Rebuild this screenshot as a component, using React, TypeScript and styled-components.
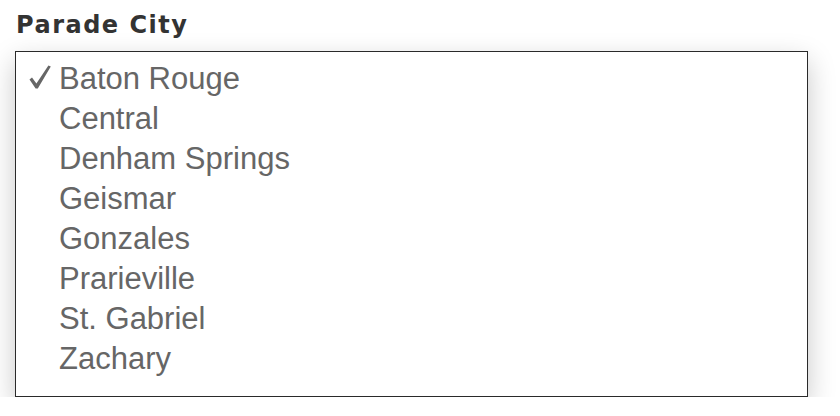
import { createGlobalStyle } from "styled-components";
import styled from "styled-components";

const cities = [
  "Baton Rouge",
  "Central",
  "Denham Springs",
  "Geismar",
  "Gonzales",
  "Prarieville",
  "St. Gabriel",
  "Zachary",
];

const GlobalStyle = createGlobalStyle`
  html, body {
    margin: 0;
    padding: 0;
    background: #ffffff;
  }
`;

const CheckIcon = () => (
  <svg width="22" height="24" viewBox="0 0 22 24">
    <path
      d="M0.5 14.6 L3 12.6 L7.4 18.4 L19.4 0.4 L21.8 1.6 L8.8 23.6 L6.6 23.6 Z"
      fill="#666666"
    />
  </svg>
);

const App = () => {
  const selected = "Baton Rouge";

  return (
    <>
      <GlobalStyle />
      <Field>
        <Label>Parade City</Label>
        <List>
          { cities.map(city => (
            <Option key={ city }>
              <Check>{ city === selected && <CheckIcon /> }</Check>
              <Name>{ city }</Name>
            </Option>
          )) }
        </List>
      </Field>
    </>
  )
}

const Field = styled.div`
  padding: 10px 0 0 16px;
  width: 792px;
`;

const Label = styled.div`
  font-family: "DejaVu Sans", "Noto Sans", sans-serif;
  font-weight: 700;
  font-size: 24px;
  line-height: 30px;
  letter-spacing: 1.5px;
  color: #333333;
  margin-bottom: 11px;
`;

const List = styled.div`
  margin-left: -1px;
  height: 346px;
  box-sizing: border-box;
  border: 1px solid #2a2a2a;
  background: #ffffff;
  padding-top: 7px;
  box-shadow: 0 10px 26px rgba(0, 0, 0, 0.22);
`;

const Option = styled.div`
  display: flex;
  align-items: baseline;
  height: 40px;
  line-height: 40px;
`;

const Check = styled.span`
  display: flex;
  align-items: baseline;
  width: 43px;
  box-sizing: border-box;
  padding-left: 13px;
`;

const Name = styled.span`
  font-family: "Liberation Sans", Arial, sans-serif;
  font-size: 31px;
  color: #666666;
`;

export default App;
